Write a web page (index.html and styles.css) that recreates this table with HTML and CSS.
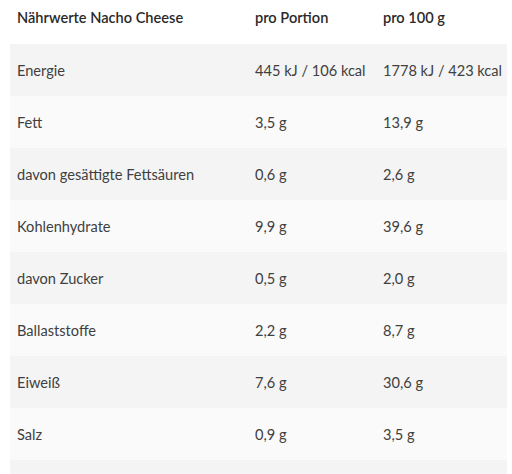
FILE: index.html
```html
<!DOCTYPE html>
<html lang="de">
<head>
<meta charset="utf-8">
<link rel="stylesheet" href="styles.css">
</head>
<body>
<div class="wrap">
<table class="nutri">
  <thead>
    <tr><th class="c1">Nährwerte Nacho Cheese</th><th class="c2">pro Portion</th><th class="c3">pro 100 g</th></tr>
  </thead>
  <tbody>
    <tr><td>Energie</td><td>445 kJ / 106 kcal</td><td>1778 kJ / 423 kcal</td></tr>
    <tr><td>Fett</td><td>3,5 g</td><td>13,9 g</td></tr>
    <tr><td>davon gesättigte Fettsäuren</td><td>0,6 g</td><td>2,6 g</td></tr>
    <tr><td>Kohlenhydrate</td><td>9,9 g</td><td>39,6 g</td></tr>
    <tr><td>davon Zucker</td><td>0,5 g</td><td>2,0 g</td></tr>
    <tr><td>Ballaststoffe</td><td>2,2 g</td><td>8,7 g</td></tr>
    <tr><td>Eiweiß</td><td>7,6 g</td><td>30,6 g</td></tr>
    <tr><td>Salz</td><td>0,9 g</td><td>3,5 g</td></tr>
    <tr class="empty"><td></td><td></td><td></td></tr>
  </tbody>
</table>
</div>
</body>
</html>
```
FILE: styles.css
```css
html, body {
  margin: 0;
  padding: 0;
  background: #fff;
}
body {
  font-family: Lato, "Open Sans", sans-serif;
  color: #404040;
  font-size: 14.6px;
}
.wrap {
  padding: 0 5px 0 10px;
}
.nutri {
  width: 497px;
  border-collapse: collapse;
  table-layout: fixed;
}
.nutri th {
  text-align: left;
  font-weight: 600;
  color: #2a2a2a;
  height: 44px;
  padding: 0 7px 10px;
  vertical-align: middle;
  box-sizing: border-box;
  white-space: nowrap;
}
.c1 { width: 238px; }
.c2 { width: 128px; }
.c3 { width: 131px; }
.nutri td {
  height: 52px;
  padding: 0 7px;
  vertical-align: middle;
  box-sizing: border-box;
  white-space: nowrap;
}
.nutri tbody tr:nth-child(odd) { background: #f4f4f4; }
.nutri tbody tr:nth-child(even) { background: #fafafa; }
```
